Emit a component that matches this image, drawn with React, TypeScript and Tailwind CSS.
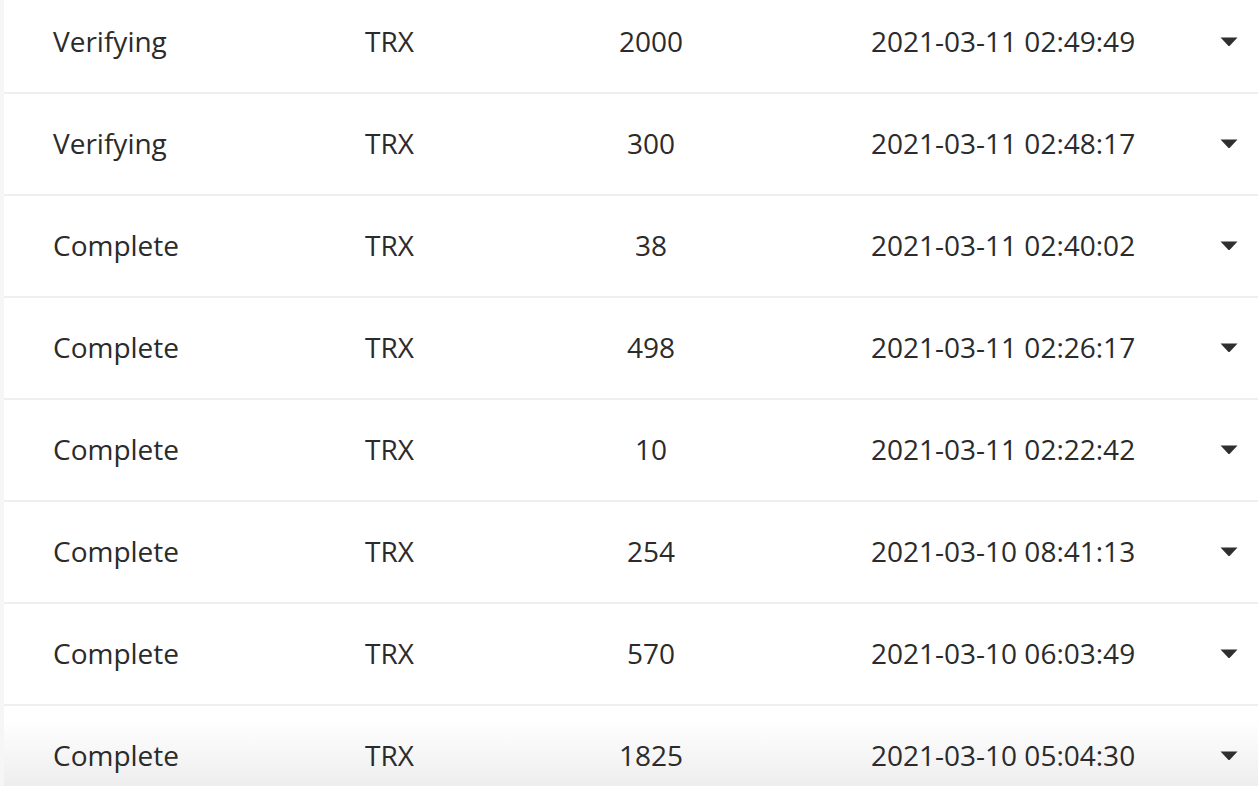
import React from "react";

type Deposit = {
  status: string;
  coin: string;
  amount: string;
  time: string;
};

const deposits: Deposit[] = [
  { status: "Verifying", coin: "TRX", amount: "2000", time: "2021-03-11 02:49:49" },
  { status: "Verifying", coin: "TRX", amount: "300", time: "2021-03-11 02:48:17" },
  { status: "Complete", coin: "TRX", amount: "38", time: "2021-03-11 02:40:02" },
  { status: "Complete", coin: "TRX", amount: "498", time: "2021-03-11 02:26:17" },
  { status: "Complete", coin: "TRX", amount: "10", time: "2021-03-11 02:22:42" },
  { status: "Complete", coin: "TRX", amount: "254", time: "2021-03-10 08:41:13" },
  { status: "Complete", coin: "TRX", amount: "570", time: "2021-03-10 06:03:49" },
  { status: "Complete", coin: "TRX", amount: "1825", time: "2021-03-10 05:04:30" },
];

const Caret: React.FC = () => (
  <svg width="18" height="10" viewBox="0 0 18 10" className="block">
    <path d="M0.5 0.5 H17.5 L10 8.6 Q9 9.6 8 8.6 Z" fill="#2f2f2f" />
  </svg>
);

const App: React.FC = () => {
  return (
    <div
      className="w-[1258px] h-[786px] overflow-hidden bg-[#f6f6f6] pl-[4px]"
      style={{ fontFamily: '"Open Sans", "Noto Sans", sans-serif' }}
    >
      <div className="bg-white -mt-[8px] text-[28px] text-[#2b2b2b]">
        {deposits.map((d, i) => (
          <div
            key={i}
            className={`flex items-center h-[102px] pb-[2px] border-b-2 border-[#efefef] ${
              i === deposits.length - 1
                ? "bg-linear-to-b from-white from-15% to-[#ececec] to-85%"
                : ""
            }`}
          >
            <div className="w-[361px] pl-[49px]">{d.status}</div>
            <div className="w-[186px]">{d.coin}</div>
            <div className="w-[200px] text-center">{d.amount}</div>
            <div className="w-[120px]" />
            <div className="flex-1">{d.time}</div>
            <div className="mr-[20px] mt-[2px]">
              <Caret />
            </div>
          </div>
        ))}
      </div>
    </div>
  );
};

export default App;
